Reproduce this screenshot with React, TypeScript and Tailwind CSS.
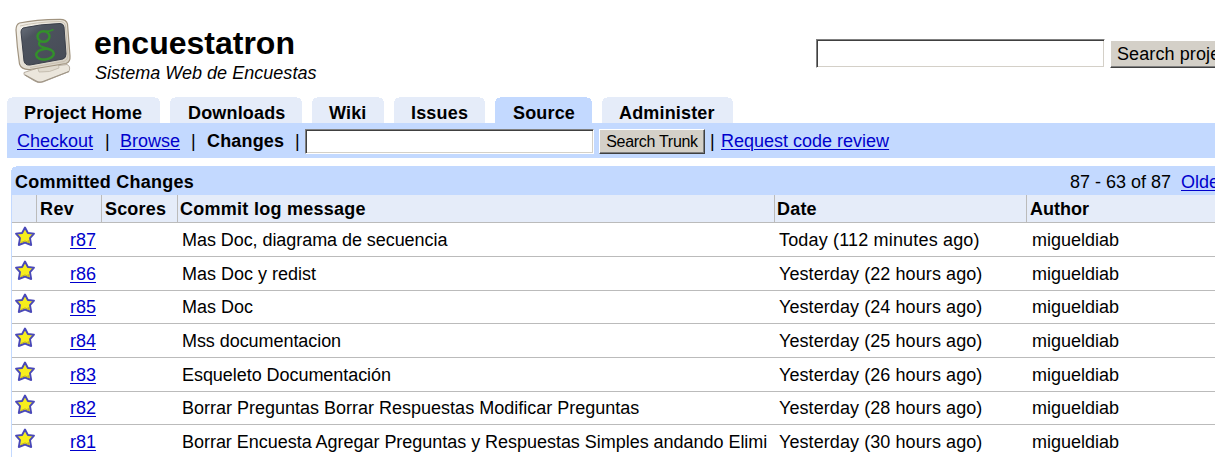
import type { ReactNode } from "react";

function Monitor() {
  return (
    <svg className="block h-[76px] w-[70px]" viewBox="0 0 70 76">
      <defs>
        <linearGradient id="frame" x1="0" y1="0" x2="1" y2="1">
          <stop offset="0" stopColor="#f6f3ec" />
          <stop offset="1" stopColor="#d3ccbf" />
        </linearGradient>
        <linearGradient id="screen" x1="0" y1="0" x2="0.8" y2="1">
          <stop offset="0" stopColor="#6d747f" />
          <stop offset="0.3" stopColor="#4d535e" />
          <stop offset="1" stopColor="#474c57" />
        </linearGradient>
      </defs>
      <path d="M14 60.500L28 56L57 52.500Q61 54 59 59.500L33 70Q28 71.500 24.500 69L14 62.500Z" fill="#ebe6dc" stroke="#b0a698" strokeWidth="0.900" />
      <path d="M15 63L26 69Q29 71 33 69.500L59 59.500" fill="none" stroke="#9f9586" strokeWidth="1.300" />
      <path d="M27 54L48 50L49 56Q40 61 29 60Z" fill="#e0dace" stroke="#b9b0a2" strokeWidth="0.700" />
      <path d="M9.500 11Q25 7.500 50 7.300Q56.500 7.300 57.500 12L60 44Q60.500 50 56 51.500L20 57.500Q11.500 58 9.500 52Q7 35 6 18Q6 12.500 9.500 11Z" fill="url(#frame)" stroke="#a0937f" strokeWidth="1.200" />
      <path d="M10 14Q26 10 49 9.500Q55 9.300 55.500 14L58 43Q58 48 54 49.500L20 55.500" fill="none" stroke="#c4baa9" strokeWidth="0.800" />
      <path d="M13 16Q30 12 50 11.500Q53.500 11.500 54 15L56 42Q56 46 53 47L20 53Q15 53.500 14 49L11 20Q11 17 13 16Z" fill="url(#screen)" stroke="#3a3f4a" strokeWidth="1" />
      <g fill="none" stroke="#33902b">
        <ellipse cx="33.500" cy="24.500" rx="6" ry="5.300" strokeWidth="2.400" />
        <path d="M36 19.500Q40 19.500 43.500 17.500" strokeWidth="2" />
        <path d="M30 29.500Q27.500 32.500 31 34.500L40 37.500" strokeWidth="2.200" />
        <ellipse cx="35" cy="42.200" rx="8.800" ry="5.300" strokeWidth="2.500" transform="rotate(-6 35 42.200)" />
      </g>
    </svg>
  );
}

function Star() {
  return (
    <svg className="block h-[22px] w-[22px]" viewBox="0 0 22 22">
      <path d="M11 1.500L13.900 7L20 7.600L16 12.200L17.200 19L11 16.600L4.800 19L6 12.200L2 7.600L8.100 7Z" fill="#f7ee1c" stroke="#4a49b8" strokeWidth="1.900" strokeLinejoin="round" />
      <path d="M14 14L15 16.500L11 14.900L7 16.500" fill="none" stroke="#b9ab2a" strokeWidth="0.900" />
    </svg>
  );
}

const notch =
  "[clip-path:polygon(0_4px,1px_4px,1px_2px,2px_2px,2px_1px,5px_1px,5px_0,calc(100%-5px)_0,calc(100%-5px)_1px,calc(100%-2px)_1px,calc(100%-2px)_2px,calc(100%-1px)_2px,calc(100%-1px)_4px,100%_4px,100%_100%,0_100%)]";

function Tab({ width, active, children }: { width: string; active?: boolean; children: ReactNode }) {
  return (
    <div className={`${width} ${notch} ${active ? "bg-[#c3d9ff]" : "bg-[#e5ecf9]"} h-[26px] shrink-0 pt-[6px] font-bold tracking-[0.17px]`}>
      {children}
    </div>
  );
}

function Link({ className = "", children }: { className?: string; children: ReactNode }) {
  return (
    <a href="#" className={`${className} block shrink-0 text-[#0000cc] underline decoration-1 underline-offset-2`}>
      {children}
    </a>
  );
}

const sunken =
  "border border-t-[#808080] border-l-[#808080] border-r-white border-b-white bg-white outline-none shadow-[inset_1px_1px_0_#404040,inset_-1px_-1px_0_#d4d0c8]";
const raised =
  "border border-t-white border-l-white border-r-[#404040] border-b-[#404040] bg-[#d4d0c8] shadow-[inset_-1px_-1px_0_#808080]";
const columns = "grid grid-cols-[24px_65px_76px_597px_252px_1fr]";

const rows = [
  { rev: "r87", log: "Mas Doc, diagrama de secuencia", date: "Today (112 minutes ago)", height: "h-[34px]", tracking: "tracking-[-0.06px]", dateTracking: "tracking-[0.17px]" },
  { rev: "r86", log: "Mas Doc y redist", date: "Yesterday (22 hours ago)", height: "h-[34px]" },
  { rev: "r85", log: "Mas Doc", date: "Yesterday (24 hours ago)", height: "h-[33px]", raise: true },
  { rev: "r84", log: "Mss documentacion", date: "Yesterday (25 hours ago)", height: "h-[34px]", tracking: "tracking-[-0.06px]" },
  { rev: "r83", log: "Esqueleto Documentación", date: "Yesterday (26 hours ago)", height: "h-[34px]", tracking: "tracking-[-0.05px]" },
  { rev: "r82", log: "Borrar Preguntas Borrar Respuestas Modificar Preguntas", date: "Yesterday (28 hours ago)", height: "h-[33px]", raise: true },
  { rev: "r81", log: "Borrar Encuesta Agregar Preguntas y Respuestas Simples andando Elimi", date: "Yesterday (30 hours ago)", height: "h-[34px]", tracking: "tracking-[-0.03px]" },
];

export default function App() {
  return (
    <div className="h-[457px] w-full overflow-hidden bg-white font-['Liberation_Sans',Arial,sans-serif] text-[18px] leading-[21px] whitespace-nowrap text-black">
      <header className="flex h-[97px]">
        <div className="w-[84px] shrink-0 pt-3 pl-[10px]">
          <Monitor />
        </div>
        <div className="w-[732px] shrink-0 pl-[10px] pt-[25px]">
          <h1 className="text-[32px] leading-[37px] font-bold">encuestatron</h1>
          <p className="pt-px pl-px tracking-[0.03px] italic">Sistema Web de Encuestas</p>
        </div>
        <input className={`${sunken} mt-[39px] h-[29px] w-[289px] shrink-0`} />
        <button className={`${raised} mt-10 ml-[5px] h-7 w-[150px] shrink-0 pl-[6px] text-left tracking-[0.1px]`}>
          Search projects
        </button>
      </header>

      <nav className="flex gap-[10px] pl-[7px]">
        <Tab width="w-[153px] pl-[17px]">Project Home</Tab>
        <Tab width="w-[132px] pl-[18px]">Downloads</Tab>
        <Tab width="w-[72px] pl-[17px]">Wiki</Tab>
        <Tab width="w-[91px] pl-[17px]">Issues</Tab>
        <Tab width="w-[97px] pl-[18px]" active>Source</Tab>
        <Tab width="w-[131px] pl-[17px]">Administer</Tab>
      </nav>

      <div className="ml-[7px] flex h-[35px] bg-[#c3d9ff] pt-2 pl-[10px]">
        <Link className="w-[88px]">Checkout</Link>
        <span className="w-[15px] shrink-0">|</span>
        <Link className="w-[71px]">Browse</Link>
        <span className="w-[16px] shrink-0">|</span>
        <b className="w-[88px] shrink-0 tracking-[0.17px]">Changes</b>
        <span className="w-[10px] shrink-0">|</span>
        <input className={`${sunken} -mt-[2px] h-[25px] w-[289px] shrink-0`} />
        <button className={`${raised} -mt-[2px] ml-[5px] h-[25px] w-[106px] shrink-0 text-[16px] leading-[22px] tracking-[-0.3px]`}>
          Search Trunk
        </button>
        <span className="w-[16px] shrink-0 pl-[5px]">|</span>
        <Link>Request code review</Link>
      </div>

      <main className="mt-2 ml-[11px]">
        <div className="flex h-[29px] bg-[#c3d9ff] pt-[6px] pl-1 [clip-path:polygon(0_4px,1px_4px,1px_2px,2px_2px,2px_1px,5px_1px,5px_0,100%_0,100%_100%,0_100%)]">
          <b className="w-[1055px] shrink-0 tracking-[0.23px]">Committed Changes</b>
          <span className="w-[111px] shrink-0">87 - 63 of 87</span>
          <Link>Older</Link>
        </div>
        <div className="border-l border-[#c3d9ff]">
          <div className={`${columns} h-7 border-b border-[#bbbbbb] bg-[#e5ecf9] font-bold *:border-l *:border-[#bbbbbb] *:pt-1 *:pl-[3px]`}>
            <div className="border-l-0!" />
            <div className="tracking-[0.4px]">Rev</div>
            <div className="tracking-[0.17px]">Scores</div>
            <div className="pl-[2px]! tracking-[0.27px]">Commit log message</div>
            <div className="pl-[2px]! tracking-[0.2px]">Date</div>
            <div>Author</div>
          </div>
          {rows.map((row) => (
            <div key={row.rev} className={`${columns} ${row.height} border-b border-[#bbbbbb]`}>
              <div className={`${row.raise ? "pt-[2px]" : "pt-[3px]"} pl-[2px]`}><Star /></div>
              <div className={`${row.raise ? "pt-[6px]" : "pt-[7px]"} pl-[34px]`}><Link>{row.rev}</Link></div>
              <div />
              <div className={`${row.raise ? "pt-[6px]" : "pt-[7px]"} ${row.tracking ?? ""} pl-[5px]`}>{row.log}</div>
              <div className={`${row.raise ? "pt-[6px]" : "pt-[7px]"} ${row.dateTracking ?? "tracking-[0.08px]"} pl-[5px]`}>{row.date}</div>
              <div className={`${row.raise ? "pt-[6px]" : "pt-[7px]"} pl-[6px]`}>migueldiab</div>
            </div>
          ))}
        </div>
      </main>
    </div>
  );
}
